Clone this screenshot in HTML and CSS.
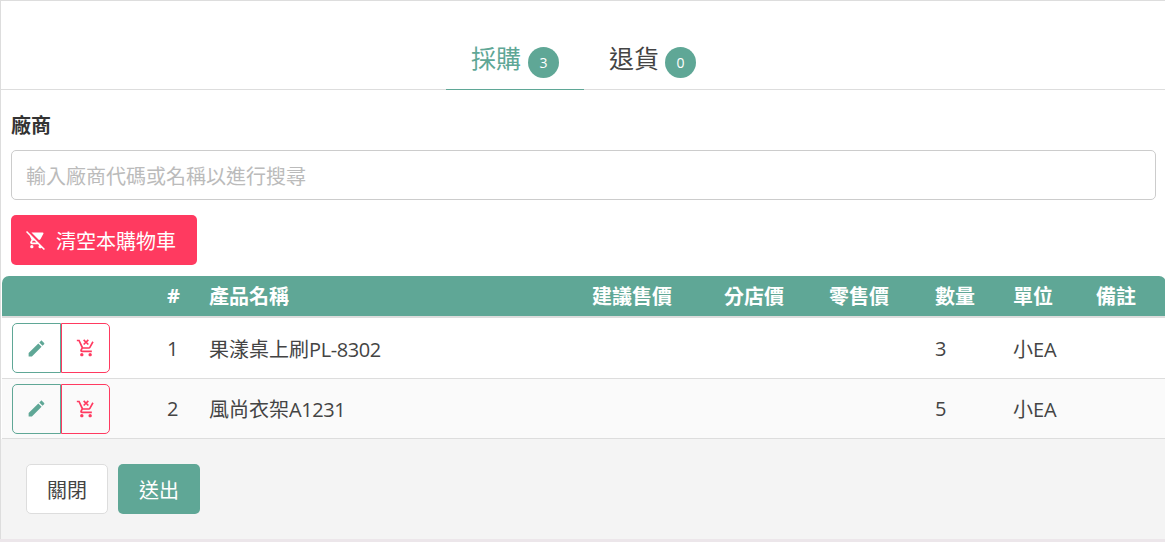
FILE: index.html
```html
<!DOCTYPE html>
<html lang="zh-Hant">
<head>
    <meta charset="UTF-8">
    <meta name="viewport" content="width=device-width, initial-scale=1.0">
    <title>採購</title>
    <link rel="stylesheet" href="styles.css">
</head>
<body>
    <div class="panel">
        <div class="tabs">
            <div class="tab active">採購<span class="badge">3</span></div>
            <div class="tab">退貨<span class="badge">0</span></div>
        </div>
        <div class="form">
            <label class="label">廠商</label>
            <input class="input" type="text" placeholder="輸入廠商代碼或名稱以進行搜尋">
            <button class="clear-btn">
                <svg class="icon" viewBox="0 0 24 24"><path d="M22.73,22.73L1.27,1.27L0,2.54L4.39,6.93L6.6,11.59L5.25,14.04C5.09,14.32 5,14.65 5,15A2,2 0 0,0 7,17H14.46L15.84,18.38C15.34,18.74 15,19.33 15,20A2,2 0 0,0 17,22C17.67,22 18.26,21.67 18.62,21.16L21.46,24L22.73,22.73M7.42,15A0.25,0.25 0 0,1 7.17,14.75L7.2,14.63L8.1,13H10.46L12.46,15H7.42M15.55,12C16.3,12 16.96,11.59 17.3,10.97L20.88,4.5C20.96,4.34 21,4.17 21,4A1,1 0 0,0 20,3H6.54L15.55,12M7,18A2,2 0 0,0 5,20A2,2 0 0,0 7,22A2,2 0 0,0 9,20A2,2 0 0,0 7,18Z"/></svg>
                清空本購物車
            </button>
        </div>
        <table class="items">
            <thead>
                <tr>
                    <th class="col-actions"></th>
                    <th class="col-no">#</th>
                    <th class="col-name">產品名稱</th>
                    <th class="col-price">建議售價</th>
                    <th class="col-branch">分店價</th>
                    <th class="col-retail">零售價</th>
                    <th class="col-qty">數量</th>
                    <th class="col-unit">單位</th>
                    <th class="col-note">備註</th>
                </tr>
            </thead>
            <tbody>
                <tr>
                    <td>
                        <div class="row-btns">
                            <button class="edit-btn"><svg class="icon" viewBox="0 0 24 24"><path d="M3 17.25V21h3.75L17.81 9.94l-3.75-3.75L3 17.25zM20.71 7.04c.39-.39.39-1.02 0-1.41l-2.34-2.34c-.39-.39-1.02-.39-1.41 0l-1.83 1.83 3.75 3.75 1.83-1.83z"/></svg></button>
                            <button class="remove-btn"><svg class="icon" viewBox="0 0 24 24"><path d="M14.1 8.5L12 6.4 9.9 8.5 8.5 7.1 10.6 5 8.5 2.9 9.9 1.5 12 3.6 14.1 1.5 15.5 2.9 13.4 5 15.5 7.1 14.1 8.5M7 18C8.1 18 9 18.9 9 20S8.1 22 7 22 5 21.1 5 20 5.9 18 7 18M17 18C18.1 18 19 18.9 19 20S18.1 22 17 22 15 21.1 15 20 15.9 18 17 18M7.2 14.8C7.2 14.9 7.3 15 7.4 15H19V17H7C5.9 17 5 16.1 5 15C5 14.6 5.1 14.3 5.2 14L6.5 11.6L3 4H1V2H4.3L8.6 11H15.6L19.5 4L21.2 5L17.3 12C17 12.6 16.3 13 15.6 13H8.1L7.2 14.6V14.8Z"/></svg></button>
                        </div>
                    </td>
                    <td class="col-no">1</td>
                    <td>果漾桌上刷<span class="code">PL-8302</span></td>
                    <td></td>
                    <td></td>
                    <td></td>
                    <td>3</td>
                    <td>小EA</td>
                    <td></td>
                </tr>
                <tr class="alt">
                    <td>
                        <div class="row-btns">
                            <button class="edit-btn"><svg class="icon" viewBox="0 0 24 24"><path d="M3 17.25V21h3.75L17.81 9.94l-3.75-3.75L3 17.25zM20.71 7.04c.39-.39.39-1.02 0-1.41l-2.34-2.34c-.39-.39-1.02-.39-1.41 0l-1.83 1.83 3.75 3.75 1.83-1.83z"/></svg></button>
                            <button class="remove-btn"><svg class="icon" viewBox="0 0 24 24"><path d="M14.1 8.5L12 6.4 9.9 8.5 8.5 7.1 10.6 5 8.5 2.9 9.9 1.5 12 3.6 14.1 1.5 15.5 2.9 13.4 5 15.5 7.1 14.1 8.5M7 18C8.1 18 9 18.9 9 20S8.1 22 7 22 5 21.1 5 20 5.9 18 7 18M17 18C18.1 18 19 18.9 19 20S18.1 22 17 22 15 21.1 15 20 15.9 18 17 18M7.2 14.8C7.2 14.9 7.3 15 7.4 15H19V17H7C5.9 17 5 16.1 5 15C5 14.6 5.1 14.3 5.2 14L6.5 11.6L3 4H1V2H4.3L8.6 11H15.6L19.5 4L21.2 5L17.3 12C17 12.6 16.3 13 15.6 13H8.1L7.2 14.6V14.8Z"/></svg></button>
                        </div>
                    </td>
                    <td class="col-no">2</td>
                    <td>風尚衣架<span class="code">A1231</span></td>
                    <td></td>
                    <td></td>
                    <td></td>
                    <td>5</td>
                    <td>小EA</td>
                    <td></td>
                </tr>
            </tbody>
        </table>
        <div class="footer">
            <button class="close-btn">關閉</button>
            <button class="submit-btn">送出</button>
        </div>
    </div>
</body>
</html>
```

FILE: styles.css
```css
* {
    box-sizing: border-box;
    font-family: 'Open Sans', 'Noto Sans CJK TC', sans-serif;
}

html, body {
    height: 100%;
}

body {
    margin: 0;
    background-color: #ece6ea;
    color: #444;
    overflow: hidden;
}

.panel {
    height: 539px;
    background-color: #fff;
    border-top: 1px solid #ddd;
    border-left: 1px solid #ddd;
    display: flex;
    flex-direction: column;
}

.tabs {
    height: 89px;
    display: flex;
    justify-content: center;
    border-bottom: 1px solid #ddd;
    padding-left: 2px;
}

.tab {
    width: 138px;
    height: 89px;
    padding-top: 39px;
    display: flex;
    justify-content: center;
    align-items: flex-start;
    font-size: 25px;
    line-height: 36px;
    gap: 7px;
    border-bottom: 1px solid transparent;
}

.tab + .tab {
    gap: 6px;
    padding-right: 1px;
}

.tab.active {
    color: #5fa796;
    border-bottom-color: #5fa796;
}

.badge {
    width: 31px;
    height: 31px;
    margin-top: 7px;
    border-radius: 50%;
    background-color: #5fa796;
    color: #fff;
    font-size: 14px;
    line-height: 31px;
    text-align: center;
}

.form {
    padding: 22px 9px 0 10px;
}

.label {
    display: block;
    font-size: 20px;
    font-weight: 700;
    color: #333;
    line-height: 27px;
    margin-bottom: 11px;
}

.input {
    display: block;
    width: 100%;
    height: 50px;
    padding: 2px 14px 0;
    border: 1px solid #ccc;
    border-radius: 5px;
    font-size: 20px;
    outline: none;
}

.input::placeholder {
    color: #bbb;
}

.clear-btn {
    display: flex;
    align-items: center;
    gap: 10px;
    height: 50px;
    width: 186px;
    margin-top: 15px;
    padding: 0 15px;
    border: none;
    border-radius: 5px;
    background-color: #ff3a60;
    color: #fff;
    font-size: 20px;
}

.clear-btn .icon {
    width: 20px;
    height: 20px;
    fill: #fff;
}

.items {
    width: 1164px;
    margin: 11px 0 0 1px;
    border-collapse: separate;
    border-spacing: 0;
    table-layout: fixed;
    font-size: 20px;
}

.items th {
    height: 42px;
    padding: 0 0 2px;
    background-color: #5fa796;
    border-bottom: 2px solid #ddd;
    color: #fff;
    font-weight: 700;
    text-align: left;
}

.items th:first-child {
    border-top-left-radius: 7px;
}

.items th:last-child {
    border-top-right-radius: 7px;
}

.items td {
    height: 61px;
    padding: 0;
    border-bottom: 1px solid #ddd;
}

.items tr.alt td {
    height: 60px;
    background-color: #fafafa;
}

.code {
    letter-spacing: -0.4px;
}

.col-actions { width: 155px; }
.items .col-no { width: 52px; padding-left: 10px; }
.col-name { width: 383px; }
.col-price { width: 132px; }
.col-branch { width: 105px; }
.col-retail { width: 106px; }
.col-qty { width: 78px; }
.col-unit { width: 83px; }
.col-note { width: 70px; }

.row-btns {
    display: flex;
    margin-left: 10px;
}

.row-btns button {
    width: 49px;
    height: 50px;
    padding: 0;
    background: transparent;
    display: flex;
    align-items: center;
    justify-content: center;
}

.row-btns .icon {
    width: 20px;
    height: 20px;
}

.edit-btn {
    border: 1px solid #5fa796;
    border-radius: 5px 0 0 5px;
}

.row-btns .edit-btn .icon {
    width: 21px;
    height: 21px;
    fill: #5fa796;
}

.remove-btn {
    border: 1px solid #ff3a60;
    border-radius: 0 5px 5px 0;
}

.remove-btn .icon {
    fill: #ff3a60;
}

.footer {
    flex: 1;
    background-color: #f4f4f4;
    padding: 25px;
    display: flex;
    align-items: flex-start;
    gap: 10px;
}

.footer button {
    width: 82px;
    height: 50px;
    border-radius: 5px;
    font-size: 20px;
}

.close-btn {
    background-color: #fff;
    border: 1px solid #ddd;
    color: #444;
}

.submit-btn {
    background-color: #5fa796;
    border: none;
    color: #fff;
}
```
